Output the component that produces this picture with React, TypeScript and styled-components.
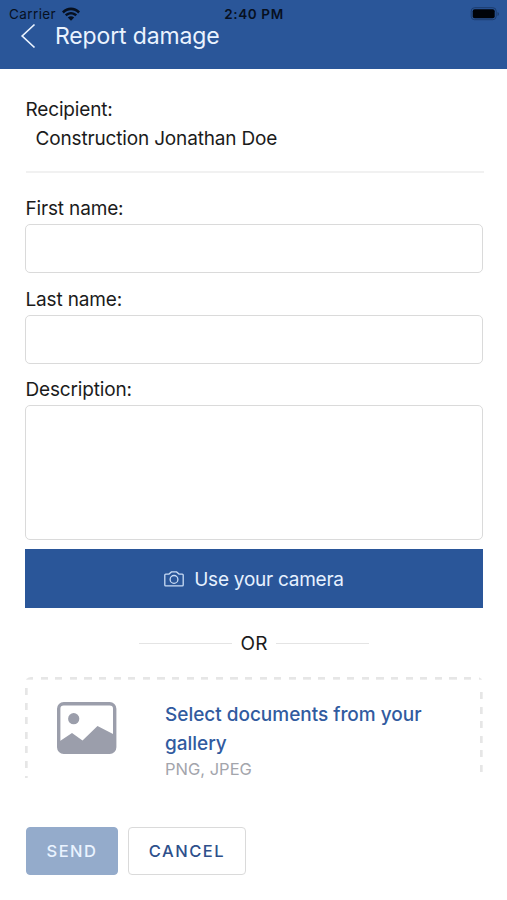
import React from "react";
import styled, { createGlobalStyle } from "styled-components";

const GlobalStyle = createGlobalStyle`
  *, *::before, *::after { box-sizing: border-box; }
  body {
    margin: 0;
    background: #fff;
    color: #1b1b1b;
    font-family: Inter, "Liberation Sans", sans-serif;
    font-size: 19px;
    line-height: 29px;
  }
`;

const Screen = styled.div`
  height: 900px;
  display: flex;
  flex-direction: column;
  overflow: hidden;
`;

const Header = styled.header`
  height: 69px;
  flex: none;
  background: #2a5699;
`;

const StatusBar = styled.div`
  height: 20px;
  padding: 7px 7px 0 9px;
  display: grid;
  grid-template-columns: 1fr auto 1fr;
  align-items: center;
  color: #07101f;
  font-size: 13.5px;
  line-height: 14px;
`;

const Carrier = styled.div`
  display: flex;
  align-items: center;
  gap: 6px;
  letter-spacing: 0.4px;
`;

const Clock = styled.div`
  margin-right: 1px;
  font-weight: 600;
  letter-spacing: 0.6px;
`;

const BatteryIcon = styled.svg`
  justify-self: end;
`;

const TitleRow = styled.div`
  height: 32px;
  padding-left: 20px;
  display: flex;
  align-items: center;
  color: #eaf3ff;
`;

const Title = styled.h1`
  margin: 0 0 0 19px;
  font-size: 23px;
  font-weight: 400;
  line-height: 32px;
  letter-spacing: -0.15px;
`;

const Form = styled.main`
  height: 709px;
  flex: none;
  padding: 26px 24px 0 25px;
  overflow: hidden;
`;

const Line = styled.div<{ $indent?: number }>`
  padding-left: ${(p) => p.$indent ?? 0.5}px;
  letter-spacing: -0.16px;
  white-space: nowrap;
`;

const Divider = styled.hr`
  height: 2px;
  margin: 18px -1px 21px 1px;
  border: 0;
  background: #f1f1f1;
`;

const Field = styled.label`
  display: block;
  margin-bottom: 11.5px;
`;

const fieldBox = `
  display: block;
  width: 100%;
  margin: 1px 0 0;
  border: 1px solid #dadada;
  border-radius: 5px;
  background: #fff;
  resize: none;
  outline: none;
  font: inherit;
`;

const Input = styled.input`
  ${fieldBox}
  height: 49px;
`;

const TextArea = styled.textarea`
  ${fieldBox}
  height: 135px;
`;

const CameraButton = styled.button`
  width: 100%;
  height: 59px;
  margin-top: -2.5px;
  padding: 2px 0 0;
  display: flex;
  align-items: center;
  justify-content: center;
  gap: 10px;
  border: 0;
  background: #2a5699;
  color: #e6f1ff;
  font: inherit;
  letter-spacing: -0.25px;
`;

const CameraIcon = styled.svg`
  margin-bottom: 1px;
`;

const OrRow = styled.div`
  height: 29px;
  margin: 21px 0 19px;
  display: flex;
  align-items: center;
  justify-content: center;
  gap: 9px;
`;

const Rule = styled.span`
  width: 93px;
  height: 1px;
  margin-bottom: 1px;
  background: #e4e4e4;
`;

const DropZone = styled.section`
  height: 101px;
  padding: 22px 30px 0;
  display: flex;
  gap: 46px;
  border-top-left-radius: 6px;
  border-top-right-radius: 6px;
  background:
    repeating-linear-gradient(90deg, #e6e6e6 0 7.3px, transparent 7.3px 14.6px) 0.5px 0 / 100% 2.7px no-repeat,
    repeating-linear-gradient(180deg, #e6e6e6 0 7px, transparent 7px 14.6px) 0 11px / 2.7px 100% no-repeat,
    repeating-linear-gradient(180deg, #e6e6e6 0 7px, transparent 7px 14.6px) 100% 15px / 2.7px 84px no-repeat;
`;

const DropText = styled.div`
  width: 270px;
  padding-top: 1px;
`;

const DropTitle = styled.div`
  color: #315b9f;
  font-weight: 500;
  letter-spacing: -0.02px;
  line-height: 29px;
`;

const DropHint = styled.div`
  padding-top: 1px;
  color: #a3a5ac;
  font-size: 16.5px;
  line-height: 20px;
`;

const Actions = styled.footer`
  padding: 49px 26px 0;
  display: flex;
  gap: 10px;
`;

const ActionButton = styled.button<{ $filled?: boolean }>`
  width: ${(p) => (p.$filled ? 92 : 118)}px;
  height: 48px;
  padding: 0;
  border: 1px solid ${(p) => (p.$filled ? "#94abcb" : "#dadada")};
  border-radius: 4px;
  background: ${(p) => (p.$filled ? "#94abcb" : "#fff")};
  color: ${(p) => (p.$filled ? "#eaf3ff" : "#2d4f8b")};
  font: 500 16.5px/24px Inter, sans-serif;
  letter-spacing: 1.5px;
`;

export default function App() {
  return (
    <Screen>
      <GlobalStyle />
      <Header>
        <StatusBar>
          <Carrier>
            Carrier
            <svg width="18" height="14" viewBox="0 0 18 14" fill="#07101f">
              <path d="M0 4.5C5-.9 13-.9 18 4.5L16.2 6.4C12.2 2.2 5.8 2.2 1.8 6.4Z" />
              <path d="M2.9 7.5C6.3 4 11.7 4 15.1 7.5L13.3 9.3C10.9 6.9 7.1 6.9 4.7 9.3Z" />
              <path d="M5.8 10.4C7.6 8.7 10.4 8.7 12.2 10.4L9 13.7Z" />
            </svg>
          </Carrier>
          <Clock>2:40 PM</Clock>
          <BatteryIcon width="30" height="14" viewBox="0 0 30 14">
            <rect x="1.2" y="0.7" width="25" height="12" rx="3.4" fill="none" stroke="#1c3c6d" />
            <rect x="2.7" y="2.2" width="22" height="9" rx="2" fill="#000308" />
            <path d="M27.5 5v4q1.5-.6 1.5-2T27.5 5Z" fill="#1c3c6d" />
          </BatteryIcon>
        </StatusBar>
        <TitleRow>
          <svg width="16" height="26" viewBox="0 0 16 26" fill="none" stroke="#eaf3ff" strokeWidth="1.7">
            <path d="M14.5 1.5 2.2 13 14.5 24.5" />
          </svg>
          <Title>Report damage</Title>
        </TitleRow>
      </Header>

      <Form>
        <Line>Recipient:</Line>
        <Line $indent={10.5}>Construction Jonathan Doe</Line>
        <Divider />
        <Field>
          <Line>First name:</Line>
          <Input />
        </Field>
        <Field>
          <Line>Last name:</Line>
          <Input />
        </Field>
        <Field>
          <Line>Description:</Line>
          <TextArea />
        </Field>
        <CameraButton>
          <CameraIcon width="20" height="16" viewBox="0 0 20 16" fill="none" stroke="#c9dcf5" strokeWidth="1.3">
            <path d="M1.7 3.1H5L7.4.9h5.2L15 3.1h3.3q.9 0 .9.9v10q0 .9-.9.9H1.7q-.9 0-.9-.9V4q0-.9.9-.9Z" />
            <circle cx="10" cy="8.4" r="3.9" />
          </CameraIcon>
          Use your camera
        </CameraButton>
        <OrRow>
          <Rule />
          OR
          <Rule />
        </OrRow>
        <DropZone>
          <svg width="64" height="56" viewBox="0 0 64 56">
            <rect x="3.7" y="4.7" width="56" height="48.6" rx="5" fill="none" stroke="#9b9eab" strokeWidth="3.4" />
            <circle cx="18.7" cy="19.7" r="5.6" fill="#9b9eab" />
            <path d="M3.5 43 17 34l10.5 7.5L42.5 27 60 36v13q0 4-4 4H8q-4.5 0-4.5-4Z" fill="#9b9eab" />
          </svg>
          <DropText>
            <DropTitle>Select documents from your gallery</DropTitle>
            <DropHint>PNG, JPEG</DropHint>
          </DropText>
        </DropZone>
      </Form>

      <Actions>
        <ActionButton $filled>SEND</ActionButton>
        <ActionButton>CANCEL</ActionButton>
      </Actions>
    </Screen>
  );
}
